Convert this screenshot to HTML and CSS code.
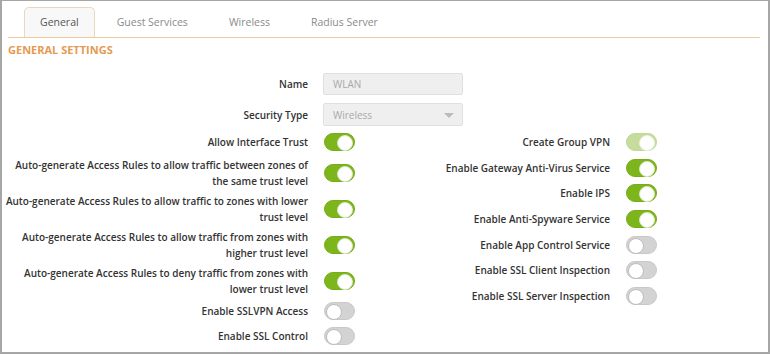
FILE: index.html
```html
<!DOCTYPE html>
<html>
<head>
<meta charset="utf-8">
<link rel="stylesheet" href="styles.css">
</head>
<body>
<div class="frame">
  <div class="tabs">
    <div class="tab active">General</div>
    <div class="tab">Guest Services</div>
    <div class="tab">Wireless</div>
    <div class="tab">Radius Server</div>
  </div>
  <div class="section-title">GENERAL SETTINGS</div>
  <div class="fields">
    <div class="row field-row"><span class="label">Name</span><div class="input">WLAN</div></div>
    <div class="row field-row sel"><span class="label">Security Type</span><div class="input select">Wireless<span class="caret"></span></div></div>
  </div>
  <div class="columns">
    <div class="col left">
      <div class="row"><span class="label">Allow Interface Trust</span><span class="toggle on"></span></div>
      <div class="row two"><span class="label">Auto-generate Access Rules to allow traffic between zones of the same trust level</span><span class="toggle on"></span></div>
      <div class="row two"><span class="label">Auto-generate Access Rules to allow traffic to zones with lower trust level</span><span class="toggle on"></span></div>
      <div class="row two"><span class="label">Auto-generate Access Rules to allow traffic from zones with higher trust level</span><span class="toggle on"></span></div>
      <div class="row two"><span class="label">Auto-generate Access Rules to deny traffic from zones with lower trust level</span><span class="toggle on"></span></div>
      <div class="row"><span class="label">Enable SSLVPN Access</span><span class="toggle"></span></div>
      <div class="row"><span class="label">Enable SSL Control</span><span class="toggle"></span></div>
    </div>
    <div class="col right">
      <div class="row"><span class="label">Create Group VPN</span><span class="toggle on disabled"></span></div>
      <div class="row"><span class="label">Enable Gateway Anti-Virus Service</span><span class="toggle on"></span></div>
      <div class="row"><span class="label">Enable IPS</span><span class="toggle on"></span></div>
      <div class="row"><span class="label">Enable Anti-Spyware Service</span><span class="toggle on"></span></div>
      <div class="row"><span class="label">Enable App Control Service</span><span class="toggle"></span></div>
      <div class="row"><span class="label">Enable SSL Client Inspection</span><span class="toggle"></span></div>
      <div class="row"><span class="label">Enable SSL Server Inspection</span><span class="toggle"></span></div>
    </div>
  </div>
</div>
</body>
</html>
```
FILE: styles.css
```css
* { box-sizing: border-box; }
html, body { margin: 0; padding: 0; background: #fff; }
body { font-family: "Open Sans", "Liberation Sans", sans-serif; }

.frame {
  width: 770px;
  height: 354px;
  border: 2px solid #a6a6a6;
  border-top-width: 1px;
  padding: 6px 8px 0 6px;
  overflow: hidden;
}

.tabs {
  display: flex;
  border-bottom: 1px solid #efc9a2;
  padding-left: 16px;
  height: 31px;
}
.tab {
  height: 30px;
  line-height: 30px;
  padding: 0 16px;
  margin-right: 9px;
  font-size: 10.5px;
  color: #8a8a8a;
}
.tab.active {
  color: #555;
  background: #f8f8f8;
  border: 1px solid #ecd6bd;
  border-bottom: none;
  border-radius: 5px 5px 0 0;
  line-height: 29px;
  padding: 0 15px;
  margin-right: 6px;
}

.section-title {
  margin-top: 5px;
  font-size: 11px;
  line-height: 14px;
  font-weight: 700;
  color: #e69a52;
}

.label {
  font-size: 10px;
  font-weight: 600;
  color: #333;
  text-align: right;
  line-height: 16px;
}

.fields { margin-top: 16px; margin-left: -6px; }
.row {
  display: grid;
  align-items: center;
}
.field-row {
  grid-template-columns: 306px 140px;
  column-gap: 15px;
  height: 22px;
  margin-bottom: 8px;
}
.field-row.sel { height: 23px; }
.input {
  height: 100%;
  background: #efefef;
  border: 1px solid #e0e0e0;
  border-radius: 2px;
  font-size: 10px;
  color: #a9a9a9;
  padding-left: 9px;
  display: flex;
  align-items: center;
  position: relative;
}
.caret {
  position: absolute;
  right: 8px;
  top: 9px;
  width: 0; height: 0;
  border-left: 5px solid transparent;
  border-right: 5px solid transparent;
  border-top: 5px solid #bbb;
}

.columns {
  display: flex;
  margin-left: -6px;
  margin-top: -2px;
}
.col { display: flex; flex-direction: column; }
.col.left { width: 380px; gap: 5px; }
.col.left .row { grid-template-columns: 306px 31px; column-gap: 16px; height: 20px; }
.col.left .row.two { height: 31px; }
.col.right { gap: 3.7px; margin-top: -1px; }
.col.right .row { grid-template-columns: 228px 31px; column-gap: 16px; height: 22px; }

.toggle {
  position: relative;
  width: 31px;
  height: 18px;
  border-radius: 9px;
  background: #d3d3d3;
  border: 1px solid #c9c9c9;
}
.toggle::after {
  content: "";
  position: absolute;
  top: 1px;
  left: 1px;
  width: 14px;
  height: 14px;
  border-radius: 50%;
  background: #fff;
  border: 1px solid #bdbdbd;
}
.toggle.on { background: #7cb51c; border-color: #77ad18; }
.toggle.on::after { left: auto; right: 1px; border-color: #d9e8bf; }
.toggle.on.disabled { background: #c6dc9c; border-color: #c1d896; }
.toggle.on.disabled::after { border-color: #eaf2dc; }
```
